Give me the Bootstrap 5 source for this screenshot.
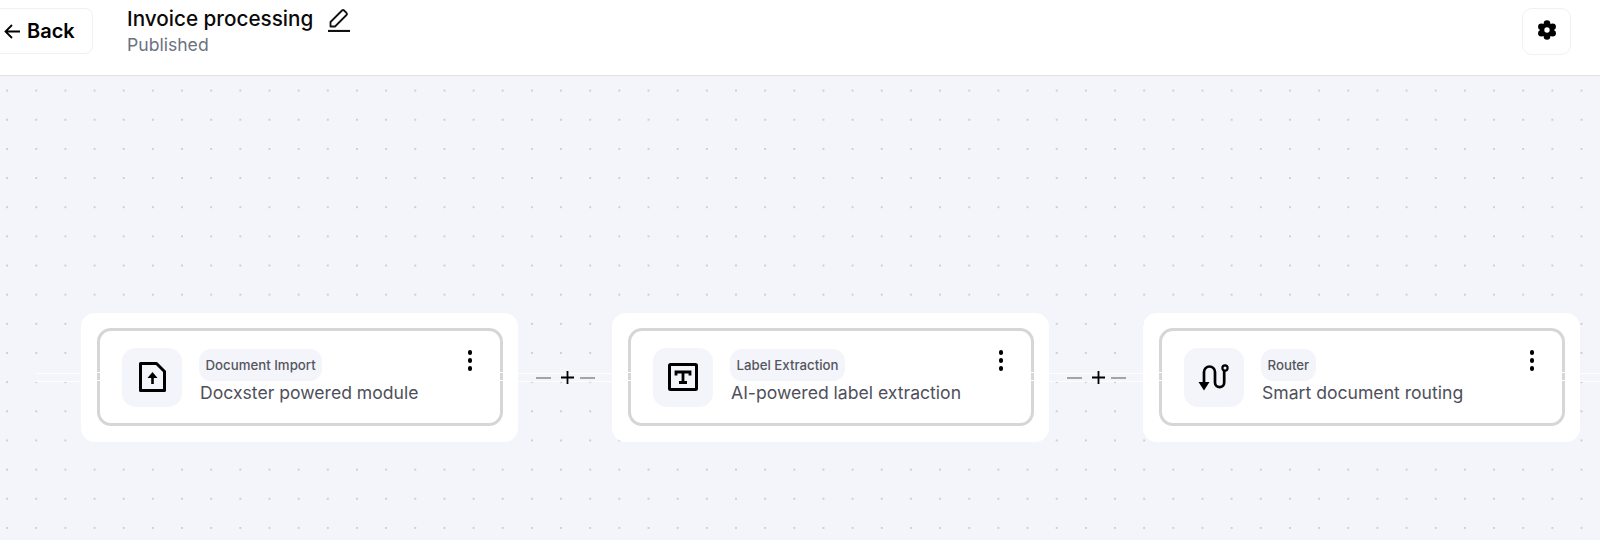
<!DOCTYPE html>
<html lang="en">
<head>
    <meta charset="UTF-8">
    <meta name="viewport" content="width=device-width, initial-scale=1, shrink-to-fit=no">
    <title>Invoice processing</title>
    <link href="https://cdn.jsdelivr.net/npm/bootstrap@5.3.0/dist/css/bootstrap.min.css" rel="stylesheet">
    <style>
        body {
            font-family: Inter, "Noto Sans", sans-serif;
            background-color: #f4f5fa;
            overflow: hidden;
        }
        .top-bar {
            height: 76px;
            padding: 8px 29px 0 0;
            background-color: #fff;
            border-bottom: 1px solid #e2e2e4;
        }
        .back-btn {
            width: 102px;
            height: 46px;
            margin-left: -9px;
            margin-right: 34px;
            padding: 0 0 0 11px;
            font-size: 20px;
            font-weight: 600;
            color: #000;
            background-color: #fff;
            border: 1px solid #f1f1f3;
            border-radius: 8px;
        }
        .back-btn span {
            margin-left: 1px;
        }
        .flow-name {
            margin: -2px 0 0;
            font-size: 20.7px;
            line-height: 26px;
            font-weight: 500;
            color: #0a0a0a;
        }
        .edit-icon {
            margin-left: 6px;
        }
        .flow-state {
            margin-top: 2px;
            font-size: 17.6px;
            line-height: 22px;
            color: #6b7280;
        }
        .gear-btn {
            width: 49px;
            height: 47px;
            padding: 0 0 3px;
            background-color: #fff;
            border: 1px solid #f1f1f3;
            border-radius: 10px;
        }
        .flow-canvas {
            height: 464px;
            padding: 237px 0 0 81px;
            background-color: #f4f5fa;
            background-image: radial-gradient(circle at center, #cdcfd5 0, #cdcfd5 1px, transparent 1.3px);
            background-size: 29.17px 29.17px;
            background-position: -7.5px 0;
        }
        .wire-line {
            position: absolute;
            left: 35px;
            right: 0;
            top: 297px;
            height: 9px;
            border-top: 1px solid rgba(255, 255, 255, 0.8);
            border-bottom: 1px solid rgba(255, 255, 255, 0.8);
        }
        .flow-node {
            position: relative;
            width: 437px;
            height: 129px;
            padding: 15px 15px 16px 16px;
            background-color: #fff;
            border-radius: 14px;
        }
        .node-box {
            height: 98px;
            padding: 0 22px;
            border: 3px solid #d6d6d6;
            border-radius: 14px;
        }
        .node-box::before,
        .node-box::after {
            content: "";
            position: absolute;
            top: 41px;
            width: 3px;
            height: 9px;
            border-top: 1px solid #fff;
            border-bottom: 1px solid #fff;
        }
        .node-box::before {
            left: -3px;
        }
        .node-box::after {
            right: -3px;
        }
        .node-icon {
            width: 60px;
            height: 59px;
            margin-right: 17px;
            background-color: #f4f5fa;
            border-radius: 14px;
        }
        .node-tag {
            height: 32px;
            padding: 0 6.5px;
            font-size: 13.25px;
            line-height: 33px;
            font-weight: 500;
            color: #55555f;
            background-color: #f4f5fa;
            border-radius: 12px;
        }
        .node-text {
            padding-left: 1px;
            font-size: 17.6px;
            line-height: 24px;
            color: #4f4f5b;
        }
        .node-menu {
            top: 19px;
            right: 28px;
            display: flex;
            flex-direction: column;
            gap: 3.5px;
        }
        .node-menu span {
            width: 4.5px;
            height: 4.5px;
            background-color: #000;
            border-radius: 50%;
        }
        .wire-add {
            position: relative;
            width: 94px;
            height: 129px;
            padding-left: 18px;
        }
        .wire-dash {
            width: 15px;
            height: 2px;
            background-color: #a3a3a8;
        }
        .wire-plus {
            width: 13px;
            height: 13px;
            margin: 0 6px 0 10px;
            color: #000;
        }
    </style>
</head>
<body>

<header class="top-bar d-flex align-items-start">
    <button type="button" class="btn back-btn d-flex align-items-center gap-1">
        <svg width="19" height="19" viewBox="0 0 19 19" fill="none" stroke="#000" stroke-width="1.8"><path d="M17 9.5H2.5M9 3 2.5 9.5 9 16"/></svg>
        <span>Back</span>
    </button>
    <div>
        <div class="d-flex align-items-center gap-2">
            <h1 class="flow-name">Invoice processing</h1>
            <svg class="edit-icon" width="24" height="24" viewBox="0 0 24 24" fill="none" stroke="#111" stroke-width="1.8" stroke-linejoin="round"><path d="M3.5 18.5v-4.5L15 2.5a1.5 1.5 0 0 1 2.1 0l2.4 2.4a1.5 1.5 0 0 1 0 2.1L8 18.5Z"/><path d="M1 23h22" stroke-width="2.2"/></svg>
        </div>
        <div class="flow-state">Published</div>
    </div>
    <button type="button" class="btn gear-btn ms-auto d-flex align-items-center justify-content-center">
        <svg width="20" height="20" viewBox="0 0 20 20"><g fill="#000"><circle cx="10" cy="3.6" r="3.3"/><circle cx="15.6" cy="6.8" r="3.3"/><circle cx="15.6" cy="13.2" r="3.3"/><circle cx="10" cy="16.4" r="3.3"/><circle cx="4.4" cy="13.2" r="3.3"/><circle cx="4.4" cy="6.8" r="3.3"/><circle cx="10" cy="10" r="7"/></g><circle cx="10" cy="10" r="2.7" fill="#fff"/></svg>
    </button>
</header>

<main class="flow-canvas position-relative">
    <div class="wire-line"></div>
    <div class="d-flex">
        <div class="flow-node">
            <div class="node-box d-flex align-items-center position-relative">
                <div class="node-icon d-flex align-items-center justify-content-center flex-shrink-0">
                    <svg width="27" height="30" viewBox="0 0 27 30" fill="none" stroke="#000" stroke-width="3"><path d="M1.5 1.5h16l8 8v19h-24Z" stroke-linejoin="round"/><path d="M13.5 22v-8" stroke-width="2.6"/><path d="M13.5 10 8.5 16h10Z" fill="#000" stroke="none"/></svg>
                </div>
                <div class="d-flex flex-column align-items-start">
                    <span class="node-tag">Document Import</span>
                    <span class="node-text">Docxster powered module</span>
                </div>
                <div class="node-menu position-absolute"><span></span><span></span><span></span></div>
            </div>
        </div>
        <div class="wire-add d-flex align-items-center">
            <span class="wire-dash"></span>
            <svg class="wire-plus" viewBox="0 0 13 13" stroke="currentColor" stroke-width="1.8"><path d="M6.5 0v13M0 6.5h13"/></svg>
            <span class="wire-dash"></span>
        </div>
        <div class="flow-node">
            <div class="node-box d-flex align-items-center position-relative">
                <div class="node-icon d-flex align-items-center justify-content-center flex-shrink-0">
                    <svg width="30" height="28" viewBox="0 0 30 28" fill="none" stroke="#000" stroke-width="3"><rect x="1.5" y="1.5" width="27" height="25" rx="1"/><path d="M8 12.5V9h14v3.5M15 9v9.5M11 19.5h8" stroke-width="2.8"/></svg>
                </div>
                <div class="d-flex flex-column align-items-start">
                    <span class="node-tag">Label Extraction</span>
                    <span class="node-text">AI-powered label extraction</span>
                </div>
                <div class="node-menu position-absolute"><span></span><span></span><span></span></div>
            </div>
        </div>
        <div class="wire-add d-flex align-items-center">
            <span class="wire-dash"></span>
            <svg class="wire-plus" viewBox="0 0 13 13" stroke="currentColor" stroke-width="1.8"><path d="M6.5 0v13M0 6.5h13"/></svg>
            <span class="wire-dash"></span>
        </div>
        <div class="flow-node">
            <div class="node-box d-flex align-items-center position-relative">
                <div class="node-icon d-flex align-items-center justify-content-center flex-shrink-0">
                    <svg width="32" height="27" viewBox="0 0 32 27" fill="none" stroke="#000" stroke-width="2.7"><path d="M6 21V8a5.5 5.5 0 0 1 11 0v10.5a4.6 4.6 0 0 0 9.2 0V7"/><circle cx="27" cy="4" r="2.6" stroke-width="2.2"/><path d="M0.5 18h11L6 26.5Z" fill="#000" stroke="none"/></svg>
                </div>
                <div class="d-flex flex-column align-items-start">
                    <span class="node-tag">Router</span>
                    <span class="node-text">Smart document routing</span>
                </div>
                <div class="node-menu position-absolute"><span></span><span></span><span></span></div>
            </div>
        </div>
    </div>
</main>

<script src="https://cdn.jsdelivr.net/npm/bootstrap@5.3.0/dist/js/bootstrap.bundle.min.js"></script>
</body>
</html>
